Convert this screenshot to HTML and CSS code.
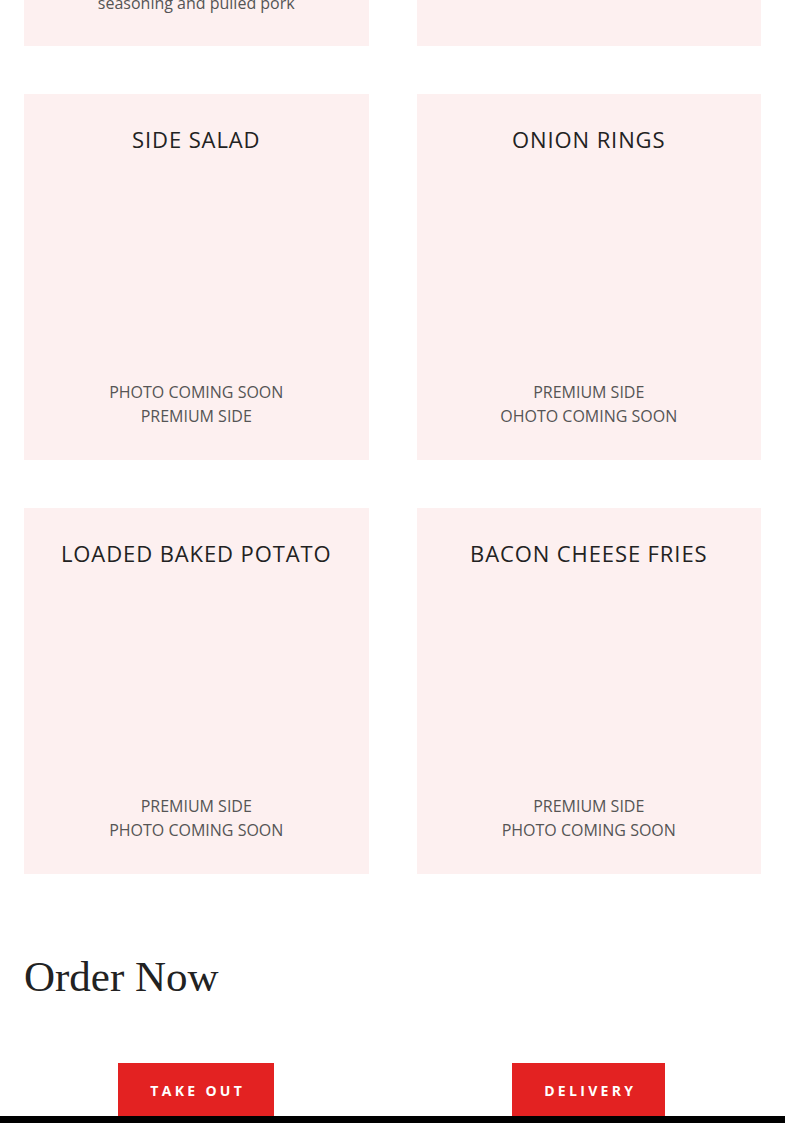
FILE: index.html
```html
<!DOCTYPE html>
<html lang="en">
<head>
    <meta charset="UTF-8">
    <meta name="viewport" content="width=device-width, initial-scale=1.0">
    <title>Sides &amp; Order Now</title>
    <link rel="stylesheet" href="styles.css">
</head>
<body>
    <div class="page">

        <section class="menu">
            <div class="item">
                <h3 class="item-title">BBQ PORK FRIES</h3>
                <div class="item-photo"></div>
                <p class="item-text">Crispy fries piled high with<br>melted cheddar, crunchy onions,<br>our sweet and smoky house<br>seasoning and pulled pork</p>
            </div>
            <div class="item">
                <h3 class="item-title">CHILI CHEESE FRIES</h3>
                <div class="item-photo"></div>
                <p class="item-text">PREMIUM SIDE<br>PHOTO COMING SOON</p>
            </div>

            <div class="item">
                <h3 class="item-title">SIDE SALAD</h3>
                <div class="item-photo"></div>
                <p class="item-text">PHOTO COMING SOON<br>PREMIUM SIDE</p>
            </div>
            <div class="item">
                <h3 class="item-title">ONION RINGS</h3>
                <div class="item-photo"></div>
                <p class="item-text">PREMIUM SIDE<br>OHOTO COMING SOON</p>
            </div>

            <div class="item">
                <h3 class="item-title">LOADED BAKED POTATO</h3>
                <div class="item-photo"></div>
                <p class="item-text">PREMIUM SIDE<br>PHOTO COMING SOON</p>
            </div>
            <div class="item">
                <h3 class="item-title">BACON CHEESE FRIES</h3>
                <div class="item-photo"></div>
                <p class="item-text">PREMIUM SIDE<br>PHOTO COMING SOON</p>
            </div>
        </section>

        <section class="order">
            <h2 class="order-title">Order Now</h2>
            <div class="order-buttons">
                <div class="order-col"><a href="#" class="btn">TAKE OUT</a></div>
                <div class="order-col"><a href="#" class="btn">DELIVERY</a></div>
            </div>
        </section>

    </div>

    <div class="footer-bar"></div>
</body>
</html>
```

FILE: styles.css
```css
body {
    font-family: "Open Sans", Arial, sans-serif;
    margin: 0;
    padding: 0;
    background-color: #fff;
    color: #555;
}

.page {
    padding: 0 24px;
}

.menu {
    display: grid;
    grid-template-columns: 1fr 1fr;
    gap: 48px 48px;
    margin-top: -367px;
}

.item {
    background-color: #fdf0f0;
    padding: 31px 20px;
    text-align: center;
    min-height: 304px;
}

.item-title {
    margin: 0;
    font-size: 22px;
    font-weight: 400;
    line-height: 28px;
    letter-spacing: 0.9px;
    color: #222;
}

.item-photo {
    height: 227px;
}

.item-text {
    margin: 0;
    font-size: 16px;
    line-height: 24px;
    color: #555;
}

.order {
    padding-top: 78px;
}

.order-title {
    margin: 0;
    font-family: "Liberation Serif", "Times New Roman", serif;
    font-size: 43px;
    font-weight: 400;
    line-height: 50px;
    color: #222;
}

.order-buttons {
    display: grid;
    grid-template-columns: 1fr 1fr;
    gap: 48px;
    margin-top: 61px;
}

.order-col {
    text-align: center;
}

.btn {
    display: inline-block;
    background-color: #e32222;
    color: #fff;
    text-decoration: none;
    font-size: 14px;
    font-weight: 700;
    letter-spacing: 3.3px;
    line-height: 20px;
    padding: 18px 29px 18px 32px;
}

.footer-bar {
    position: fixed;
    left: 0;
    right: 0;
    bottom: 0;
    height: 7px;
    background-color: #000;
}
```
